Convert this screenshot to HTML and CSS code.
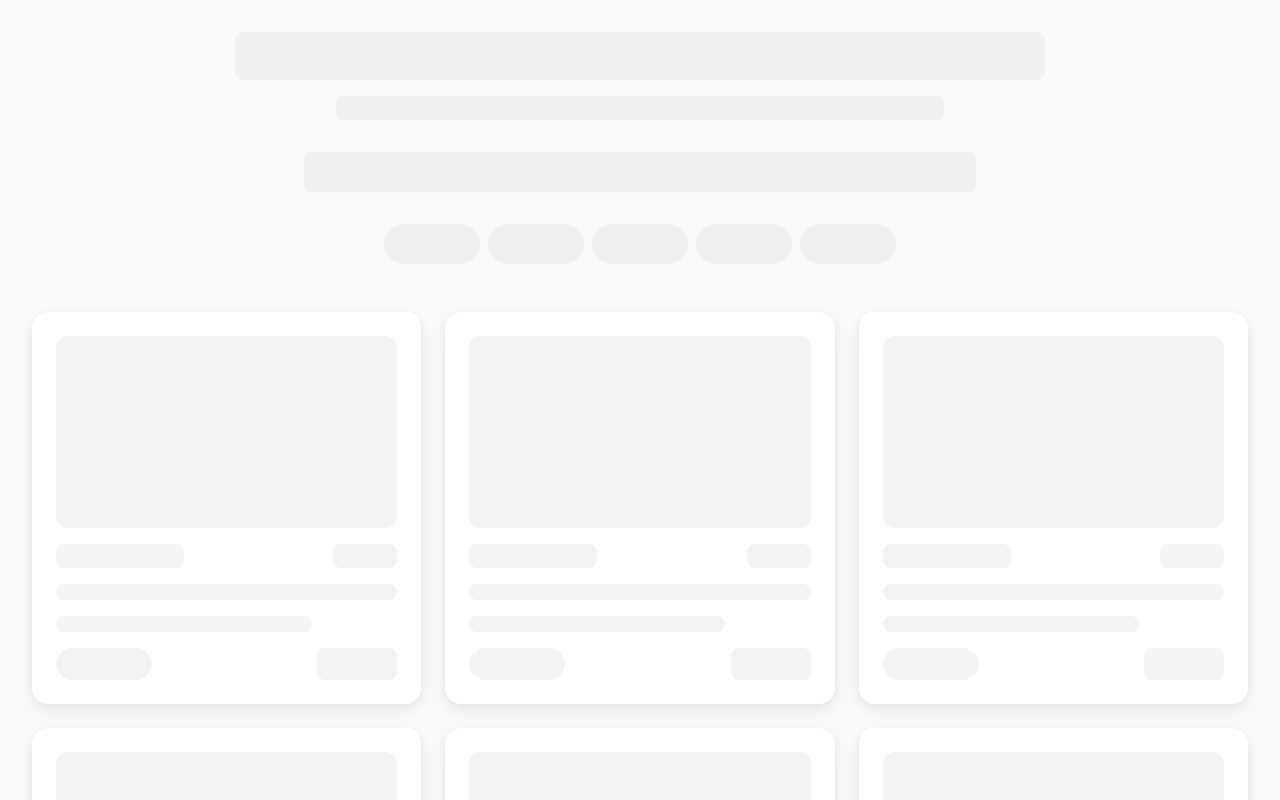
FILE: index.html
```html
<!DOCTYPE html>
<html lang="en">
<head>
<meta charset="utf-8">
<title>Loading</title>
<link rel="stylesheet" href="styles.css">
</head>
<body>
<div class="page">
  <header class="hero">
    <div class="sk sk-title"></div>
    <div class="sk sk-sub"></div>
    <div class="sk sk-search"></div>
    <div class="pills">
      <div class="sk sk-pill"></div>
      <div class="sk sk-pill"></div>
      <div class="sk sk-pill"></div>
      <div class="sk sk-pill"></div>
      <div class="sk sk-pill"></div>
    </div>
  </header>
  <main class="grid">
    <div class="card"><div class="ck ck-img"></div><div class="row"><div class="ck ck-name"></div><div class="ck ck-tag"></div></div><div class="ck ck-line"></div><div class="ck ck-line short"></div><div class="row"><div class="ck ck-btnpill"></div><div class="ck ck-btn"></div></div></div>
    <div class="card"><div class="ck ck-img"></div><div class="row"><div class="ck ck-name"></div><div class="ck ck-tag"></div></div><div class="ck ck-line"></div><div class="ck ck-line short"></div><div class="row"><div class="ck ck-btnpill"></div><div class="ck ck-btn"></div></div></div>
    <div class="card"><div class="ck ck-img"></div><div class="row"><div class="ck ck-name"></div><div class="ck ck-tag"></div></div><div class="ck ck-line"></div><div class="ck ck-line short"></div><div class="row"><div class="ck ck-btnpill"></div><div class="ck ck-btn"></div></div></div>
    <div class="card"><div class="ck ck-img"></div><div class="row"><div class="ck ck-name"></div><div class="ck ck-tag"></div></div><div class="ck ck-line"></div><div class="ck ck-line short"></div><div class="row"><div class="ck ck-btnpill"></div><div class="ck ck-btn"></div></div></div>
    <div class="card"><div class="ck ck-img"></div><div class="row"><div class="ck ck-name"></div><div class="ck ck-tag"></div></div><div class="ck ck-line"></div><div class="ck ck-line short"></div><div class="row"><div class="ck ck-btnpill"></div><div class="ck ck-btn"></div></div></div>
    <div class="card"><div class="ck ck-img"></div><div class="row"><div class="ck ck-name"></div><div class="ck ck-tag"></div></div><div class="ck ck-line"></div><div class="ck ck-line short"></div><div class="row"><div class="ck ck-btnpill"></div><div class="ck ck-btn"></div></div></div>
  </main>
</div>
</body>
</html>
```
FILE: styles.css
```css
* { box-sizing: border-box; }
html, body { margin: 0; padding: 0; }
body {
  background: #f9fafb;
  font-family: "Inter", "Liberation Sans", sans-serif;
}
.page {
  max-width: 1280px;
  margin: 0 auto;
  padding: 32px;
}
.hero {
  display: flex;
  flex-direction: column;
  align-items: center;
}
.sk { background: #eeeff1; border-radius: 8px; }
.sk-title { width: 66.6667%; height: 48px; }
.sk-sub { width: 50%; height: 24px; margin-top: 16px; }
.sk-search { width: 672px; height: 40px; margin-top: 32px; }
.pills { display: flex; gap: 8px; margin-top: 32px; }
.sk-pill { width: 96px; height: 40px; border-radius: 9999px; }
.grid {
  margin-top: 48px;
  display: grid;
  grid-template-columns: repeat(3, 1fr);
  gap: 24px;
}
.card {
  background: #ffffff;
  border-radius: 16px;
  padding: 24px;
  display: flex;
  flex-direction: column;
  gap: 16px;
  box-shadow: 0 6px 20px rgba(0,0,0,0.08), 0 2px 6px rgba(0,0,0,0.04);
}
.ck { background: #f3f3f3; border-radius: 8px; }
.ck-img { height: 192px; border-radius: 12px; }
.row { display: flex; justify-content: space-between; }
.ck-name { width: 128px; height: 24px; }
.ck-tag { width: 64px; height: 24px; }
.ck-line { height: 16px; }
.ck-line.short { width: 75%; }
.ck-btnpill { width: 96px; height: 32px; border-radius: 9999px; }
.ck-btn { width: 80px; height: 32px; }
```
